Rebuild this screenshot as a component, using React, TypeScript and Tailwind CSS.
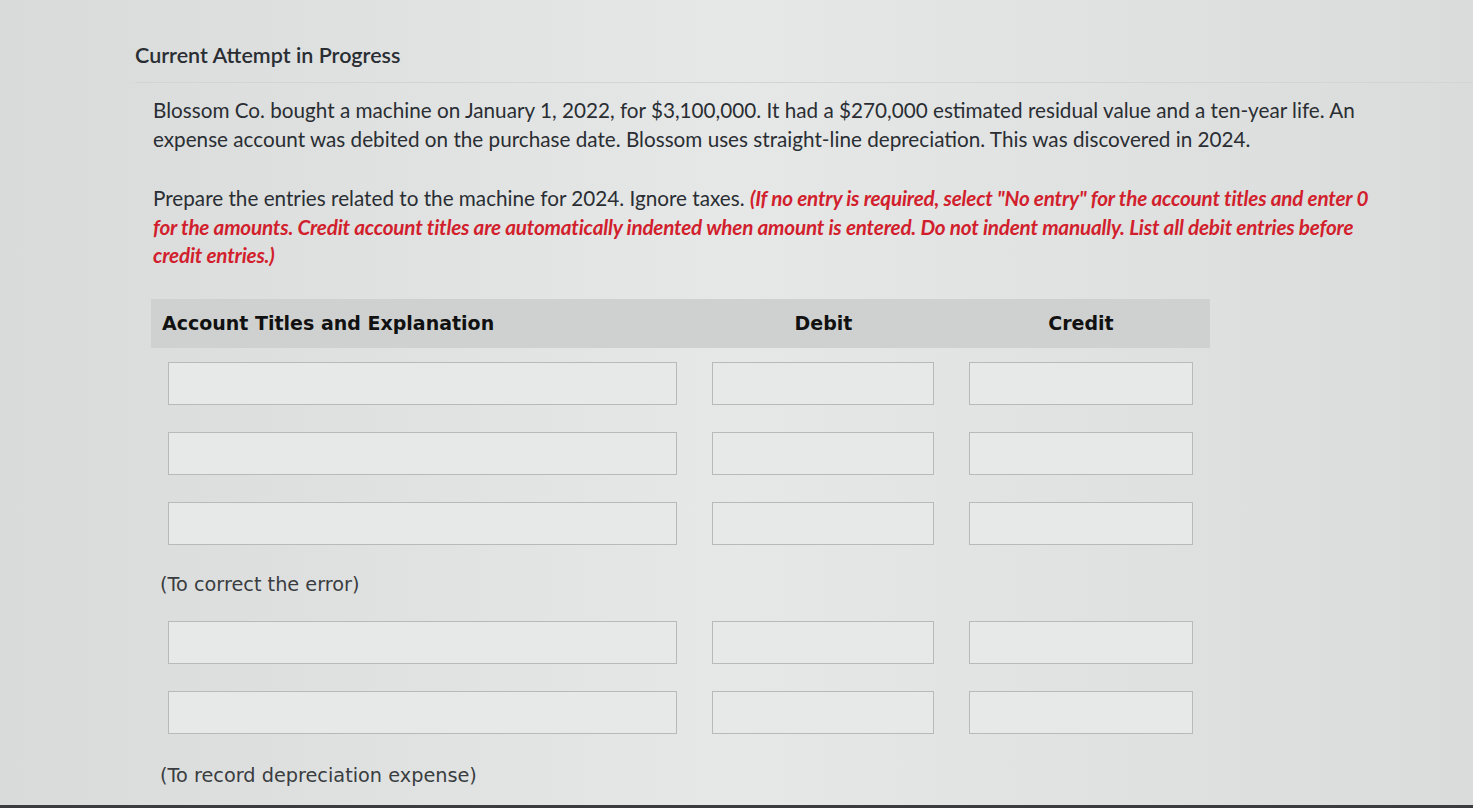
import React from "react";

const rows1 = [0, 1, 2];
const rows2 = [0, 1];

function EntryRow() {
  return (
    <div className="grid grid-cols-[544px_257px_258px]">
      <div className="pl-[17px]">
        <div className="h-[43px] w-[509px] border border-[#b7baba] bg-[#e7e9e9]" />
      </div>
      <div className="pl-[17px]">
        <div className="h-[43px] w-[222px] border border-[#b7baba] bg-[#e7e9e9]" />
      </div>
      <div className="pl-[17px]">
        <div className="h-[43px] w-[224px] border border-[#b7baba] bg-[#e7e9e9]" />
      </div>
    </div>
  );
}

export default function App() {
  return (
    <div className="relative h-[808px] w-full overflow-hidden bg-gradient-to-r from-[#d9dbdb] via-[#e6e8e8] to-[#dadcdc] border-b-[3px] border-[#3b3c3d]">
      <div className="pl-[135px] pt-[41px] font-['Lato',sans-serif] text-[#2a2e33]">
        <h1 className="text-[21.5px] leading-[28px] font-semibold">Current Attempt in Progress</h1>
        <div className="mt-[13px] border-t border-[#d3d5d5]" />

        <div className="pl-[18px] pr-[80px]">
          <p className="mt-[13px] text-[20.7px] leading-[29px]">
            Blossom Co. bought a machine on January 1, 2022, for $3,100,000. It had a $270,000 estimated residual
            value and a ten-year life. An expense account was debited on the purchase date. Blossom uses
            straight-line depreciation. This was discovered in 2024.
          </p>
          <p className="mt-[30px] text-[20.7px] leading-[28.5px]">
            Prepare the entries related to the machine for 2024. Ignore taxes.{" "}
            <span className="font-bold italic tracking-[-0.2px] text-[#d21f2d]">
              (If no entry is required, select "No entry" for the account titles and enter 0 for the amounts.
              Credit account titles are automatically indented when amount is entered. Do not indent manually.
              List all debit entries before credit entries.)
            </span>
          </p>
        </div>

        <div className="ml-[16px] mt-[29px] w-[1059px] font-['DejaVu_Sans',sans-serif]">
          <div className="grid h-[49px] grid-cols-[544px_257px_258px] items-center bg-[#cfd1d1] text-[19px] font-bold text-[#111]">
            <div className="pl-[11px]">Account Titles and Explanation</div>
            <div className="text-center">Debit</div>
            <div className="text-center">Credit</div>
          </div>

          <div className="mt-[14px] flex flex-col gap-[27px]">
            {rows1.map((r) => (
              <EntryRow key={r} />
            ))}
          </div>
          <div className="mt-[28px] pl-[9px] text-[19.3px] leading-[24px] text-[#3a3d40]">(To correct the error)</div>

          <div className="mt-[24px] flex flex-col gap-[27px]">
            {rows2.map((r) => (
              <EntryRow key={r} />
            ))}
          </div>
          <div className="mt-[30px] pl-[9px] text-[19.3px] leading-[24px] text-[#3a3d40]">
            (To record depreciation expense)
          </div>
        </div>
      </div>
    </div>
  );
}
